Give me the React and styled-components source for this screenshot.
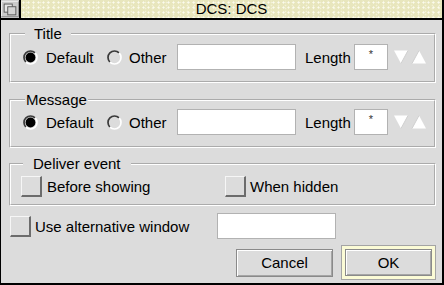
import React from "react";
import styled, { createGlobalStyle } from "styled-components";

const GlobalStyle = createGlobalStyle`
  html, body {
    margin: 0;
    padding: 0;
    background: #dcdcdc;
  }
  body {
    font-family: "Liberation Sans", Arial, sans-serif;
    font-size: 15px;
    color: #000;
  }
  * { box-sizing: border-box; }
`;

const Window = styled.div`
  width: 444px;
  height: 285px;
  display: flex;
  flex-direction: column;
  background: #dcdcdc;
  border-left: 1px solid #000;
  border-right: 2px solid #000;
  border-bottom: 2px solid #000;
`;

const TitleBar = styled.div`
  display: flex;
  height: 20px;
  flex-shrink: 0;
  border-bottom: 2px solid #000;
`;

const BackIcon = styled.div`
  width: 20px;
  height: 18px;
  border-right: 2px solid #000;
  background: #cbcbcb;
  display: flex;
`;

const TitleText = styled.div`
  flex: 1;
  display: flex;
  justify-content: center;
  align-items: center;
  line-height: 18px;
  background-color: #e8e6bd;
  background-image:
    radial-gradient(circle, #fbfbef 0.8px, transparent 1.3px),
    radial-gradient(circle, #f3f2d8 0.7px, transparent 1.1px);
  background-size: 5px 5px, 7px 3px;
  background-position: 0 0, 2px 1px;
`;

const Body = styled.div`
  display: flex;
  flex-direction: column;
  padding: 6px 6px 0 8px;
`;

const Group = styled.fieldset`
  margin: ${(p) => p.$mt || 0}px 0 0;
  padding: ${(p) => p.$pt}px 6px ${(p) => p.$pb}px ${(p) => p.$pl}px;
  border: 2px groove #fff;
  min-width: 0;
`;

const Legend = styled.legend`
  margin-left: 2px;
  padding: 0 ${(p) => p.$px}px;
  line-height: 16px;
  background: #dcdcdc;
`;

const Row = styled.div`
  display: flex;
  align-items: center;
  height: 26px;
  margin-top: ${(p) => p.$mt || 0}px;
  margin-left: ${(p) => p.$ml || 0}px;
`;

const Option = styled.label`
  display: flex;
  align-items: center;
  gap: ${(p) => p.$gap}px;
  width: ${(p) => p.$w}px;
  flex-shrink: 0;
  white-space: nowrap;
`;

const Field = styled.div`
  width: ${(p) => p.$w}px;
  height: ${(p) => p.$h || 26}px;
  flex-shrink: 0;
  background: #fff;
  border: 1px solid #b2b2b2;
  display: flex;
  justify-content: center;
  font-size: 11px;
  line-height: 18px;
  color: #333;
`;

const Label = styled.span`
  margin-left: ${(p) => p.$ml || 0}px;
  width: ${(p) => p.$w}px;
  flex-shrink: 0;
`;

const Arrows = styled.div`
  display: flex;
  margin-left: 6px;
`;

const Check = styled.span`
  width: 21px;
  height: 21px;
  flex-shrink: 0;
  background: #dcdcdc;
  border-style: solid;
  border-width: 1px 2px 2px 1px;
  border-color: #f6f6f6 #6c6c6c #6c6c6c #f6f6f6;
`;

const ButtonRow = styled.div`
  display: flex;
  justify-content: flex-end;
  align-items: center;
  gap: 8px;
  margin-top: 6px;
`;

const Button = styled.button`
  width: ${(p) => p.$w}px;
  height: ${(p) => p.$h}px;
  background: #dcdcdc;
  font: inherit;
  color: #000;
  border: 1px solid #8a8a8a;
  box-shadow: inset 1px 1px 0 #fff, inset -1px -1px 0 #a6a6a6;
  padding: 0;
`;

const DefaultFrame = styled.div`
  padding: 3px;
  background: #fbfbd6;
  border: 1px solid #a4a4a4;
  display: flex;
`;

function Radio({ on }) {
  return (
    <svg width="15" height="15" viewBox="0 0 15 15">
      <circle cx="7.5" cy="7.5" r="6.5" fill="#dcdcdc" />
      <path d="M2.9 12.1 A6.5 6.5 0 0 1 12.1 2.9" stroke="#3a3a3a" strokeWidth="1.7" fill="none" />
      <path d="M12.1 2.9 A6.5 6.5 0 0 1 2.9 12.1" stroke="#fff" strokeWidth="1.7" fill="none" />
      {on && <circle cx="7.5" cy="7.5" r="4.9" fill="#000" />}
    </svg>
  );
}

function AdjustArrows() {
  return (
    <Arrows>
      <svg width="32" height="14" viewBox="0 0 32 14">
        <polygon points="0,0.5 14,0.5 7,13.5" fill="#fff" />
        <line x1="14" y1="0.5" x2="7" y2="13.5" stroke="#cfcfcf" />
        <polygon points="18,13.5 32,13.5 25,0.5" fill="#fff" />
        <line x1="18" y1="13.5" x2="25" y2="0.5" stroke="#cfcfcf" />
      </svg>
    </Arrows>
  );
}

function TextRow() {
  return (
    <Row>
      <Option $w={84} $gap={8}>
        <Radio on />
        Default
      </Option>
      <Option $w={70} $gap={7}>
        <Radio />
        Other
      </Option>
      <Field $w={119} />
      <Label $ml={9} $w={49}>Length</Label>
      <Field $w={34}>*</Field>
      <AdjustArrows />
    </Row>
  );
}

export default function App() {
  return (
    <>
      <GlobalStyle />
      <Window>
        <TitleBar>
          <BackIcon>
            <svg width="20" height="18" viewBox="0 0 20 18">
              <path d="M0.5 17.5 V0.5 H19.5" stroke="#f2f2f2" fill="none" />
              <path d="M0.5 17.5 H19.5 V0.5" stroke="#8a8a8a" fill="none" />
              <rect x="3.5" y="3.5" width="9" height="9" fill="#e6e6e6" stroke="#555" />
              <rect x="7.5" y="6.5" width="9" height="9" fill="#d4d4d4" stroke="#555" />
            </svg>
          </BackIcon>
          <TitleText>DCS: DCS</TitleText>
        </TitleBar>
        <Body>
          <Group $pt={2} $pb={11} $pl={12}>
            <Legend $px={9}>Title</Legend>
            <TextRow />
          </Group>
          <Group $mt={9} $pt={1} $pb={11} $pl={12}>
            <Legend $px={1}>Message</Legend>
            <TextRow />
          </Group>
          <Group $mt={8} $pt={1} $pb={5} $pl={10}>
            <Legend $px={10}>Deliver event</Legend>
            <Row>
              <Option $w={204} $gap={5}>
                <Check />
                Before showing
              </Option>
              <Option $w={150} $gap={4}>
                <Check />
                When hidden
              </Option>
            </Row>
          </Group>
          <Row $mt={7} $ml={1}>
            <Option $w={207} $gap={4}>
              <Check />
              Use alternative window
            </Option>
            <Field $w={119} />
          </Row>
          <ButtonRow>
            <Button $w={97} $h={28}>Cancel</Button>
            <DefaultFrame>
              <Button $w={87} $h={27}>OK</Button>
            </DefaultFrame>
          </ButtonRow>
        </Body>
      </Window>
    </>
  );
}
